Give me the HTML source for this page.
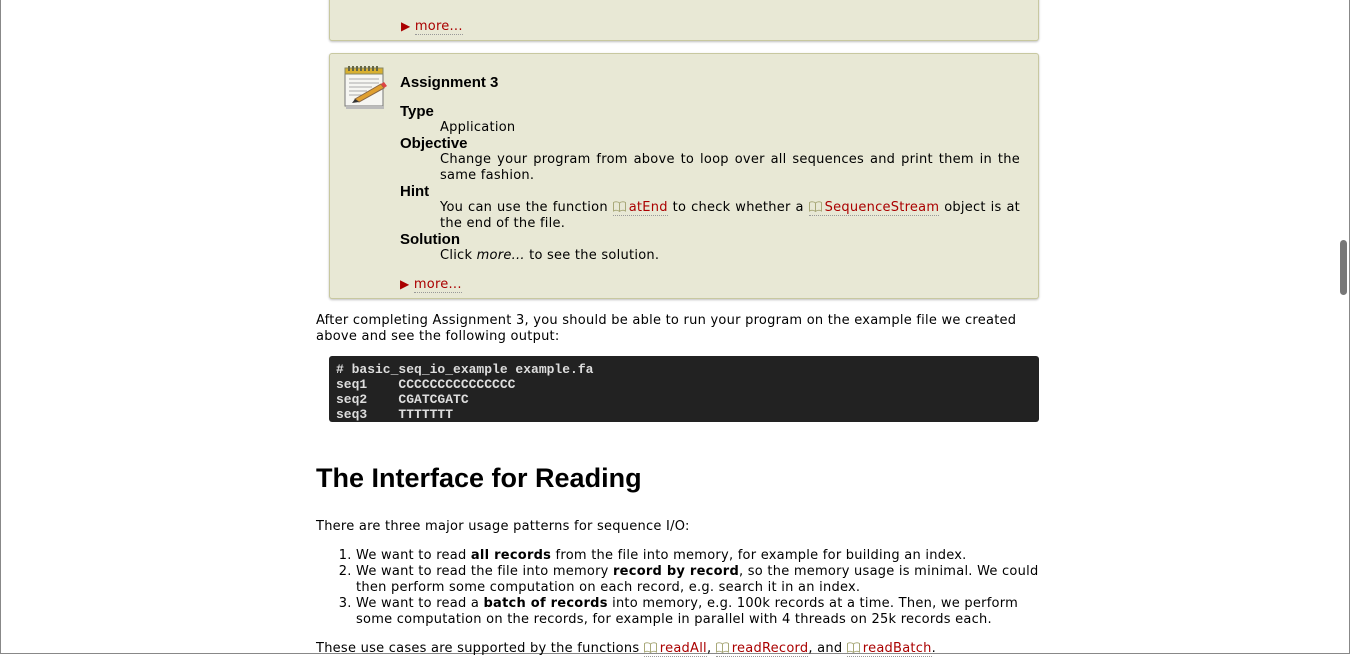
<!DOCTYPE html>
<html><head><style>
html,body{margin:0;padding:0;background:#fff;}
body{width:1350px;height:655px;overflow:hidden;position:relative;font-family:"DejaVu Sans","Liberation Sans",sans-serif;font-size:13px;line-height:16px;color:#000;letter-spacing:0.25px;}
.frame{position:absolute;left:0;top:0;width:1348px;height:653px;border:1px solid #888;border-top:none;}
.sb{position:absolute;left:1340px;top:240px;width:7px;height:55px;border-radius:4px;background:#777;}
.box{position:absolute;left:329px;width:708px;background:#e8e8d5;border:1px solid #c8c8a0;border-radius:3px;box-shadow:0 1px 2px rgba(0,0,0,.25);}
.more{color:#a00;border-bottom:1px dotted #999;}
.tri{color:#a00;font-size:12px;}
a{color:#a00;text-decoration:none;border-bottom:1px dotted #999;}
.bk{display:inline-block;vertical-align:-1px;margin-right:3px;}
.dt{font-weight:bold;font-size:15px;line-height:16px;height:16px;font-family:"Liberation Sans",sans-serif;letter-spacing:0;position:relative;top:2px;}
.dd{margin-left:40px;text-align:justify;position:relative;top:2px;}
.code{position:absolute;left:329px;top:356px;width:696px;height:54px;padding:6px 7px;background:#222;color:#ddd;border-radius:3px;font-family:"Liberation Mono",monospace;font-weight:bold;font-size:13px;line-height:15px;white-space:pre;letter-spacing:0;}
p{margin:0;}
</style></head><body>
<div class="frame"></div>
<div class="sb"></div>
<div class="box" style="top:-5px;height:44px;">
 <div style="position:absolute;left:71px;top:22px;"><span class="tri">▶</span> <span class="more">more...</span></div>
</div>
<div class="box" style="top:53px;height:244px;">
 <svg style="position:absolute;left:12px;top:10px" width="48" height="48" viewBox="0 0 48 48">
  <rect x="3" y="8" width="38" height="34" fill="#f6f6f2" stroke="#777"/>
  <rect x="3" y="4" width="38" height="6" fill="#d8b030" stroke="#886"/>
  <g fill="#664">
   <rect x="6" y="2" width="2" height="5"/><rect x="10" y="2" width="2" height="5"/><rect x="14" y="2" width="2" height="5"/><rect x="18" y="2" width="2" height="5"/><rect x="22" y="2" width="2" height="5"/><rect x="26" y="2" width="2" height="5"/><rect x="30" y="2" width="2" height="5"/><rect x="34" y="2" width="2" height="5"/>
  </g>
  <g stroke="#aaa"><line x1="7" y1="15" x2="37" y2="15"/><line x1="7" y1="19" x2="37" y2="19"/><line x1="7" y1="23" x2="30" y2="23"/><line x1="7" y1="27" x2="25" y2="27"/><line x1="7" y1="31" x2="22" y2="31"/></g>
  <rect x="4" y="42" width="38" height="3" fill="#bbb"/>
  <path d="M13 35 L39 20 L42 24 L17 38 Z" fill="#e0a030" stroke="#864"/>
  <path d="M13 35 L17 38 L10 39Z" fill="#333"/>
  <path d="M39 20 L42 24 L45 22 L42 18Z" fill="#d44"/>
 </svg>
 <div style="position:absolute;left:70px;top:19px;width:620px;">
  <div class="dt" style="margin-bottom:13px;">Assignment 3</div>
  <div class="dt">Type</div><div class="dd">Application</div>
  <div class="dt">Objective</div><div class="dd">Change your program from above to loop over all sequences and print them in the same fashion.</div>
  <div class="dt">Hint</div><div class="dd">You can use the function <a><svg class="bk" width="13" height="11" viewBox="0 0 13 11"><path d="M6.5 2 C5 0.5 2 0.5 0.5 1.5 V10 C2 9 5 9 6.5 10.5 C8 9 11 9 12.5 10 V1.5 C11 0.5 8 0.5 6.5 2 Z M6.5 2 V10.5" fill="none" stroke="#a8a878"/></svg>atEnd</a> to check whether a <a><svg class="bk" width="13" height="11" viewBox="0 0 13 11"><path d="M6.5 2 C5 0.5 2 0.5 0.5 1.5 V10 C2 9 5 9 6.5 10.5 C8 9 11 9 12.5 10 V1.5 C11 0.5 8 0.5 6.5 2 Z M6.5 2 V10.5" fill="none" stroke="#a8a878"/></svg>SequenceStream</a> object is at the end of the file.</div>
  <div class="dt">Solution</div><div class="dd">Click <i>more...</i> to see the solution.</div>
  <div style="margin-top:14px;"><span class="tri">▶</span> <span class="more">more...</span></div>
 </div>
</div>
<p style="position:absolute;left:316px;top:313px;width:725px;">After completing Assignment 3, you should be able to run your program on the example file we created above and see the following output:</p>
<div class="code"># basic_seq_io_example example.fa
seq1    CCCCCCCCCCCCCCC
seq2    CGATCGATC
seq3    TTTTTTT</div>
<h1 style="position:absolute;left:316px;top:462px;margin:0;font-family:'Liberation Sans',sans-serif;font-size:27px;line-height:32px;letter-spacing:0;">The Interface for Reading</h1>
<p style="position:absolute;left:316px;top:519px;">There are three major usage patterns for sequence I/O:</p>
<ol style="position:absolute;left:316px;top:548px;width:685px;margin:0;padding-left:40px;">
<li>We want to read <b>all records</b> from the file into memory, for example for building an index.</li>
<li>We want to read the file into memory <b>record by record</b>, so the memory usage is minimal. We could then perform some computation on each record, e.g. search it in an index.</li>
<li>We want to read a <b>batch of records</b> into memory, e.g. 100k records at a time. Then, we perform some computation on the records, for example in parallel with 4 threads on 25k records each.</li>
</ol>
<p style="position:absolute;left:316px;top:641px;">These use cases are supported by the functions <a><svg class="bk" width="13" height="11" viewBox="0 0 13 11"><path d="M6.5 2 C5 0.5 2 0.5 0.5 1.5 V10 C2 9 5 9 6.5 10.5 C8 9 11 9 12.5 10 V1.5 C11 0.5 8 0.5 6.5 2 Z M6.5 2 V10.5" fill="none" stroke="#a8a878"/></svg>readAll</a>, <a><svg class="bk" width="13" height="11" viewBox="0 0 13 11"><path d="M6.5 2 C5 0.5 2 0.5 0.5 1.5 V10 C2 9 5 9 6.5 10.5 C8 9 11 9 12.5 10 V1.5 C11 0.5 8 0.5 6.5 2 Z M6.5 2 V10.5" fill="none" stroke="#a8a878"/></svg>readRecord</a>, and <a><svg class="bk" width="13" height="11" viewBox="0 0 13 11"><path d="M6.5 2 C5 0.5 2 0.5 0.5 1.5 V10 C2 9 5 9 6.5 10.5 C8 9 11 9 12.5 10 V1.5 C11 0.5 8 0.5 6.5 2 Z M6.5 2 V10.5" fill="none" stroke="#a8a878"/></svg>readBatch</a>.</p>
</body></html>
